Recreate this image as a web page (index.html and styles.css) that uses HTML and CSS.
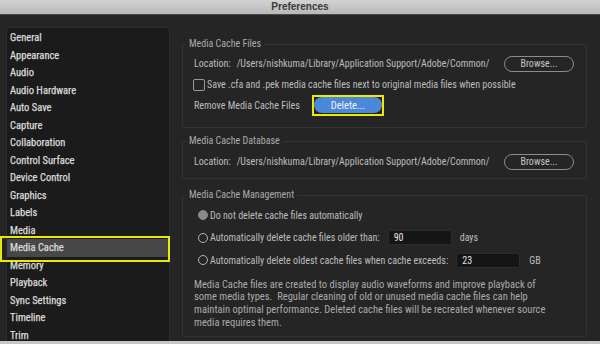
FILE: index.html
```html
<!DOCTYPE html>
<html lang="en">
<head>
  <meta charset="UTF-8">
  <meta name="viewport" content="width=device-width, initial-scale=1.0">
  <title>Preferences</title>
  <link rel="stylesheet" href="styles.css">
</head>
<body>
  <div class="window">
    <div class="titlebar">Preferences</div>
    <div class="content">
      <ul class="sidebar">
        <li>General</li>
        <li>Appearance</li>
        <li>Audio</li>
        <li>Audio Hardware</li>
        <li>Auto Save</li>
        <li>Capture</li>
        <li>Collaboration</li>
        <li>Control Surface</li>
        <li>Device Control</li>
        <li>Graphics</li>
        <li>Labels</li>
        <li>Media</li>
        <li class="active">Media Cache</li>
        <li>Memory</li>
        <li>Playback</li>
        <li>Sync Settings</li>
        <li>Timeline</li>
        <li>Trim</li>
      </ul>

      <div class="panel">
        <fieldset class="group files">
          <legend>Media Cache Files</legend>
          <div class="row split">
            <span class="location"><span class="key">Location:</span>/Users/nishkuma/Library/Application Support/Adobe/Common/</span>
            <button class="pill">Browse...</button>
          </div>
          <label class="row check">
            <span class="box"></span>Save .cfa and .pek media cache files next to original media files when possible
          </label>
          <div class="row">
            <span class="remove-label">Remove Media Cache Files</span>
            <span class="highlight"><button class="primary">Delete...</button></span>
          </div>
        </fieldset>

        <fieldset class="group database">
          <legend>Media Cache Database</legend>
          <div class="row split">
            <span class="location"><span class="key">Location:</span>/Users/nishkuma/Library/Application Support/Adobe/Common/</span>
            <button class="pill">Browse...</button>
          </div>
        </fieldset>

        <fieldset class="group management">
          <legend>Media Cache Management</legend>
          <div class="row radio-row">
            <span class="radio checked"></span>Do not delete cache files automatically
          </div>
          <div class="row radio-row">
            <span class="radio"></span>Automatically delete cache files older than:
            <span class="field">90</span>
            <span class="unit">days</span>
          </div>
          <div class="row radio-row">
            <span class="radio"></span>Automatically delete oldest cache files when cache exceeds:
            <span class="field">23</span>
            <span class="unit gb">GB</span>
          </div>
          <p class="note">
            Media Cache files are created to display audio waveforms and improve playback of<br>
            some media types.&nbsp; Regular cleaning of old or unused media cache files can help<br>
            maintain optimal performance. Deleted cache files will be recreated whenever source<br>
            media requires them.
          </p>
        </fieldset>
      </div>
    </div>
    <div class="bottom-edge"></div>
  </div>
</body>
</html>
```

FILE: styles.css
```css
:root {
  --bg: #252525;
  --sidebar-bg: #1b1b1b;
  --line: #333333;
  --text: #bdbdbd;
  --text-dim: #ababab;
  --text-bright: #dadada;
  --accent: #4b88da;
  --marker: #ecea00;
}

* {
  box-sizing: border-box;
}

body {
  margin: 0;
  height: 344px;
  overflow: hidden;
  background: var(--bg);
  font-family: "Liberation Sans Narrow", "Roboto Condensed", "Liberation Sans", sans-serif;
  font-size: 10px;
  color: var(--text);
}

.window {
  display: flex;
  flex-direction: column;
  height: 344px;
}

.titlebar {
  height: 15px;
  line-height: 14px;
  text-align: center;
  font-family: "Liberation Sans", Arial, sans-serif;
  font-size: 10px;
  font-weight: bold;
  color: #3a3a3a;
  background: linear-gradient(#d2d2d2, #b8b8b8);
  border-bottom: 1px solid #4a4a4a;
}

.content {
  flex: 1;
  display: flex;
  min-height: 0;
}

.bottom-edge {
  height: 3px;
  background: #c6c6c6;
}

/* sidebar */

.sidebar {
  list-style: none;
  margin: 12px 0 0 6px;
  padding: 1px 0 0;
  width: 164px;
  background: var(--sidebar-bg);
  border: 1px solid #2c2c2c;
  border-bottom: none;
}

.sidebar li {
  height: 17.5px;
  line-height: 17.5px;
  padding-left: 3px;
  font-size: 10.5px;
  color: var(--text-bright);
  -webkit-text-stroke: 0.25px var(--text-bright);
}

.sidebar li.active {
  position: relative;
  background: #474747;
}

.sidebar li.active::after {
  content: "";
  position: absolute;
  left: -7px;
  right: -1px;
  top: -3px;
  bottom: -5px;
  border: 2px solid var(--marker);
}

/* panel */

.panel {
  flex: 1;
  padding: 23px 13px 0 12px;
}

.group {
  margin: 0;
  min-width: 0;
  border: 1px solid var(--line);
  border-radius: 2px;
  padding: 3px 12px 11px 11px;
}

.group legend {
  margin-left: -8px;
  padding: 0 3px;
  line-height: 12px;
  color: var(--text-dim);
}

.database {
  margin-top: 7px;
  padding-top: 4px;
  padding-bottom: 6px;
}

.management {
  margin-top: 10px;
  padding-bottom: 7px;
}

.row {
  display: flex;
  align-items: center;
  height: 21px;
  white-space: nowrap;
}

.split {
  justify-content: space-between;
}

.key {
  margin-right: 6px;
}

button {
  font: inherit;
  cursor: pointer;
}

.pill {
  width: 70px;
  height: 16px;
  padding: 0;
  border: 1.5px solid #8c8c8c;
  border-radius: 8px;
  background: transparent;
  color: #c6c6c6;
}

.check .box {
  width: 12px;
  height: 12px;
  margin: 0 2px 0 -1px;
  border: 1px solid #9a9a9a;
  border-radius: 2px;
}

.remove-label {
  width: 118px;
}

.highlight {
  display: flex;
  padding-bottom: 1px;
  border: 2px solid var(--marker);
}

.primary {
  width: 68px;
  height: 16.5px;
  padding: 0;
  border: none;
  border-radius: 8px;
  background: var(--accent);
  color: #f2f2f2;
  font-size: 10.5px;
}

.radio-row {
  height: 22.5px;
}

.radio {
  width: 10px;
  height: 10px;
  margin: 0 2px 0 4px;
  border: 1.5px solid #b4b4b4;
  border-radius: 50%;
}

.radio.checked {
  border-color: #8a8a8a;
  background: #8a8a8a;
}

.field {
  width: 64px;
  height: 15px;
  line-height: 13px;
  margin-left: 8px;
  padding-left: 5px;
  background: #151515;
  border: 1px solid #2c2c2c;
  border-radius: 2px;
  color: #e2e2e2;
}

.unit {
  margin-left: 8px;
}

.unit.gb {
  margin-left: 9px;
}

.note {
  margin: 7px 0 0;
  font-size: 10.5px;
  line-height: 12.7px;
  color: var(--text-dim);
  white-space: nowrap;
}
```
